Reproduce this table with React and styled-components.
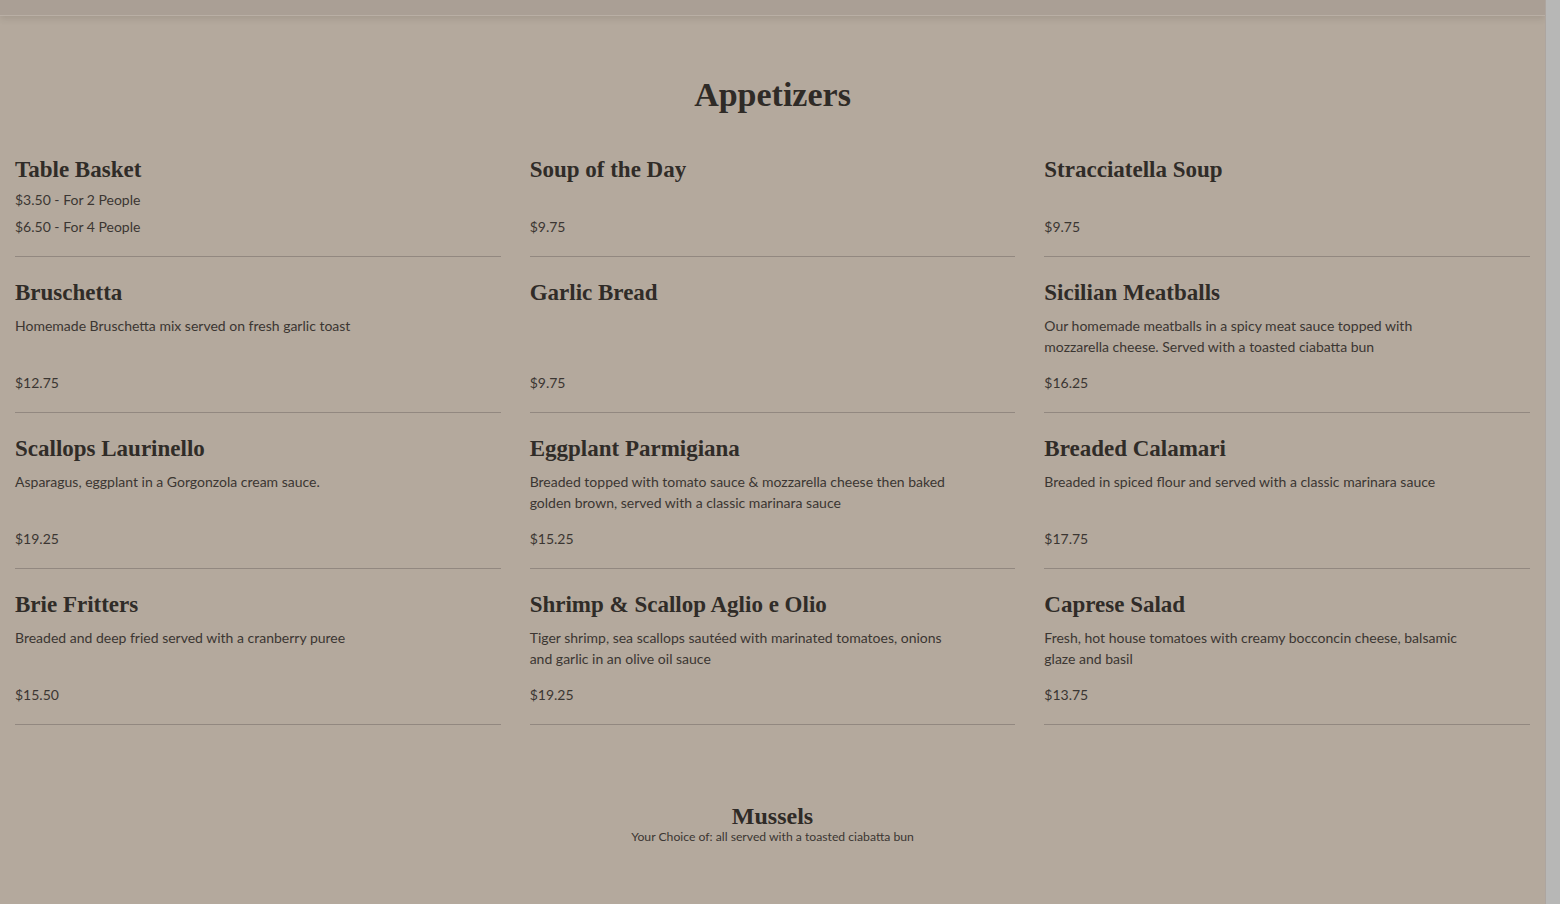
import React from 'react';
import styled, { createGlobalStyle } from 'styled-components';

const GlobalStyle = createGlobalStyle`
  html, body {
    margin: 0;
    padding: 0;
    height: 100%;
    overflow: hidden;
    background: #b4a99d;
  }
  #root {
    height: 904px;
  }
  * {
    box-sizing: border-box;
  }
`;

const Shell = styled.div`
  display: flex;
  height: 904px;
  background: #b4a99d;
`;

const Page = styled.main`
  flex: 1;
  display: flex;
  flex-direction: column;
  overflow: hidden;
`;

const Scrollbar = styled.div`
  width: 15px;
  flex: none;
  background: #b7b7b6;
  border-left: 1px solid #ada59f;
`;

const HeaderEdge = styled.div`
  height: 16px;
  flex: none;
  background: #aa9f95;
  border-bottom: 1px solid #b9afa5;
  box-shadow: 0 3px 6px rgba(60, 50, 40, 0.12);
`;

const Section = styled.section`
  padding: 0 15px;
  margin-top: ${props => props.$top || '0px'};
`;

const SectionTitle = styled.h2`
  margin: 0 0 19px;
  text-align: center;
  font-family: 'Liberation Serif', 'DejaVu Serif', serif;
  font-weight: 700;
  font-size: 34px;
  line-height: 40px;
  color: #2f2b27;
`;

const Grid = styled.div`
  display: grid;
  grid-template-columns: repeat(3, 1fr);
  column-gap: 29px;
`;

const Item = styled.article`
  display: flex;
  flex-direction: column;
  padding: 21px 0 16px;
  border-bottom: 1px solid #928880;
`;

const ItemName = styled.h3`
  margin: 0 0 2px;
  font-family: 'Liberation Serif', 'DejaVu Serif', serif;
  font-weight: 700;
  font-size: 23px;
  line-height: 29px;
  color: #302c28;
`;

const Description = styled.p`
  margin: 6px 0 12px;
  max-width: 422px;
  font-family: Lato, 'Liberation Sans', sans-serif;
  font-size: 14px;
  line-height: 21px;
  color: #3b3632;
`;

const Prices = styled.div`
  margin-top: auto;
`;

const Price = styled.div`
  font-family: Lato, 'Liberation Sans', sans-serif;
  font-size: 14px;
  line-height: 27px;
  color: #3b3632;
`;

const SubHeading = styled.div`
  text-align: center;
`;

const SubTitle = styled.h2`
  margin: 0;
  font-family: 'Liberation Serif', 'DejaVu Serif', serif;
  font-weight: 700;
  font-size: 24px;
  line-height: 28px;
  color: #2f2b27;
`;

const SubNote = styled.p`
  margin: 0;
  font-family: Lato, 'Liberation Sans', sans-serif;
  font-size: 12.2px;
  line-height: 14px;
  color: #3b3632;
`;

const appetizers = [
  { name: 'Table Basket', prices: ['$3.50 - For 2 People', '$6.50 - For 4 People'] },
  { name: 'Soup of the Day', prices: ['$9.75'] },
  { name: 'Stracciatella Soup', prices: ['$9.75'] },
  { name: 'Bruschetta', desc: 'Homemade Bruschetta mix served on fresh garlic toast', prices: ['$12.75'] },
  { name: 'Garlic Bread', prices: ['$9.75'] },
  {
    name: 'Sicilian Meatballs',
    desc: 'Our homemade meatballs in a spicy meat sauce topped with mozzarella cheese. Served with a toasted ciabatta bun',
    prices: ['$16.25'],
  },
  { name: 'Scallops Laurinello', desc: 'Asparagus, eggplant in a Gorgonzola cream sauce.', prices: ['$19.25'] },
  {
    name: 'Eggplant Parmigiana',
    desc: 'Breaded topped with tomato sauce & mozzarella cheese then baked golden brown, served with a classic marinara sauce',
    prices: ['$15.25'],
  },
  { name: 'Breaded Calamari', desc: 'Breaded in spiced flour and served with a classic marinara sauce', prices: ['$17.75'] },
  { name: 'Brie Fritters', desc: 'Breaded and deep fried served with a cranberry puree', prices: ['$15.50'] },
  {
    name: 'Shrimp & Scallop Aglio e Olio',
    desc: 'Tiger shrimp, sea scallops sautéed with marinated tomatoes, onions and garlic in an olive oil sauce',
    prices: ['$19.25'],
  },
  {
    name: 'Caprese Salad',
    desc: 'Fresh, hot house tomatoes with creamy bocconcin cheese, balsamic glaze and basil',
    prices: ['$13.75'],
  },
];

const MenuItem = ({ item }) => (
  <Item>
    <ItemName>{item.name}</ItemName>
    {item.desc && <Description>{item.desc}</Description>}
    <Prices>
      {item.prices.map(p => (
        <Price key={p}>{p}</Price>
      ))}
    </Prices>
  </Item>
);

const App = () => (
  <>
    <GlobalStyle />
    <Shell>
      <Page>
        <HeaderEdge />
        <Section $top="59px">
          <SectionTitle>Appetizers</SectionTitle>
          <Grid>
            {appetizers.map(item => (
              <MenuItem key={item.name} item={item} />
            ))}
          </Grid>
        </Section>
        <Section $top="77px">
          <SubHeading>
            <SubTitle>Mussels</SubTitle>
            <SubNote>Your Choice of: all served with a toasted ciabatta bun</SubNote>
          </SubHeading>
        </Section>
      </Page>
      <Scrollbar />
    </Shell>
  </>
);

export default App;
